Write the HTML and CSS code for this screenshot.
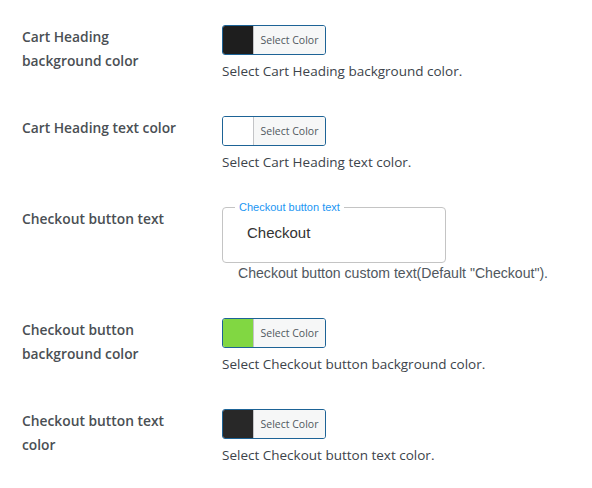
FILE: index.html
```html
<!DOCTYPE html>
<html>
<head>
<meta charset="utf-8">
<link rel="stylesheet" href="styles.css">
</head>
<body>
<div class="form">
  <div class="row r1">
    <div class="label">Cart Heading<br>background color</div>
    <div class="field">
      <button class="color-btn"><span class="swatch" style="background:#1e1e1e"></span><span class="btn-text">Select Color</span></button>
      <p class="desc">Select Cart Heading background color.</p>
    </div>
  </div>
  <div class="row r2">
    <div class="label">Cart Heading text color</div>
    <div class="field">
      <button class="color-btn"><span class="swatch" style="background:#ffffff"></span><span class="btn-text">Select Color</span></button>
      <p class="desc">Select Cart Heading text color.</p>
    </div>
  </div>
  <div class="row r3">
    <div class="label">Checkout button text</div>
    <div class="field field-text">
      <fieldset class="outlined">
        <legend class="legend">Checkout button text</legend>
        <span class="value">Checkout</span>
      </fieldset>
      <p class="desc desc-alt">Checkout button custom text(Default "Checkout").</p>
    </div>
  </div>
  <div class="row r4">
    <div class="label">Checkout button<br>background color</div>
    <div class="field">
      <button class="color-btn"><span class="swatch" style="background:#81d742"></span><span class="btn-text">Select Color</span></button>
      <p class="desc">Select Checkout button background color.</p>
    </div>
  </div>
  <div class="row r5">
    <div class="label">Checkout button text<br>color</div>
    <div class="field">
      <button class="color-btn"><span class="swatch" style="background:#282828"></span><span class="btn-text">Select Color</span></button>
      <p class="desc">Select Checkout button text color.</p>
    </div>
  </div>
</div>
</body>
</html>
```

FILE: styles.css
```css
html, body {
  margin: 0;
  padding: 0;
  background: #ffffff;
}
body {
  font-family: "Open Sans", "Lato", sans-serif;
  color: #3c434a;
}
.form {
  padding: 25px 0 0 22px;
  display: flex;
  flex-direction: column;
  gap: 35px;
}
.row {
  display: grid;
  grid-template-columns: 200px 1fr;
}
.label {
  font-size: 13.8px;
  font-weight: 600;
  line-height: 24px;
  color: #4a4f54;
}
.field {
  display: flex;
  flex-direction: column;
  align-items: flex-start;
}
.color-btn {
  display: flex;
  align-items: stretch;
  width: 104px;
  height: 30px;
  padding: 0;
  margin: 0;
  border: 1px solid #1d6396;
  border-radius: 3px;
  overflow: hidden;
  background: #f6f7f7;
  font-family: "Open Sans", "Lato", sans-serif;
  cursor: pointer;
}
.swatch {
  width: 30px;
  flex: none;
  border-right: 1px solid #c3c4c7;
}
.btn-text {
  flex: 1;
  display: flex;
  align-items: center;
  justify-content: center;
  font-size: 10.5px;
  color: #50575e;
  background: #f6f7f7;
}
.desc {
  margin: 6px 0 0;
  font-size: 13.5px;
  line-height: 20px;
  color: #3c434a;
}
.field-text {
  margin-top: -6px;
}
.outlined {
  box-sizing: border-box;
  width: 224px;
  height: 62px;
  margin: 0;
  padding: 0 0 0 12px;
  border: 1px solid #c4c4c4;
  border-radius: 4px;
}
.legend {
  padding: 0 4px;
  font-family: "Liberation Sans", Arial, sans-serif;
  font-size: 11px;
  line-height: 13px;
  color: #2196f3;
}
.value {
  display: block;
  padding: 10px 0 0 12px;
  font-family: "Liberation Sans", Arial, sans-serif;
  font-size: 15px;
  line-height: 18px;
  color: #333333;
}
.desc-alt {
  margin: 0 0 0 16px;
  font-family: "Liberation Sans", Arial, sans-serif;
  font-size: 14.1px;
  color: #50575e;
}
```
